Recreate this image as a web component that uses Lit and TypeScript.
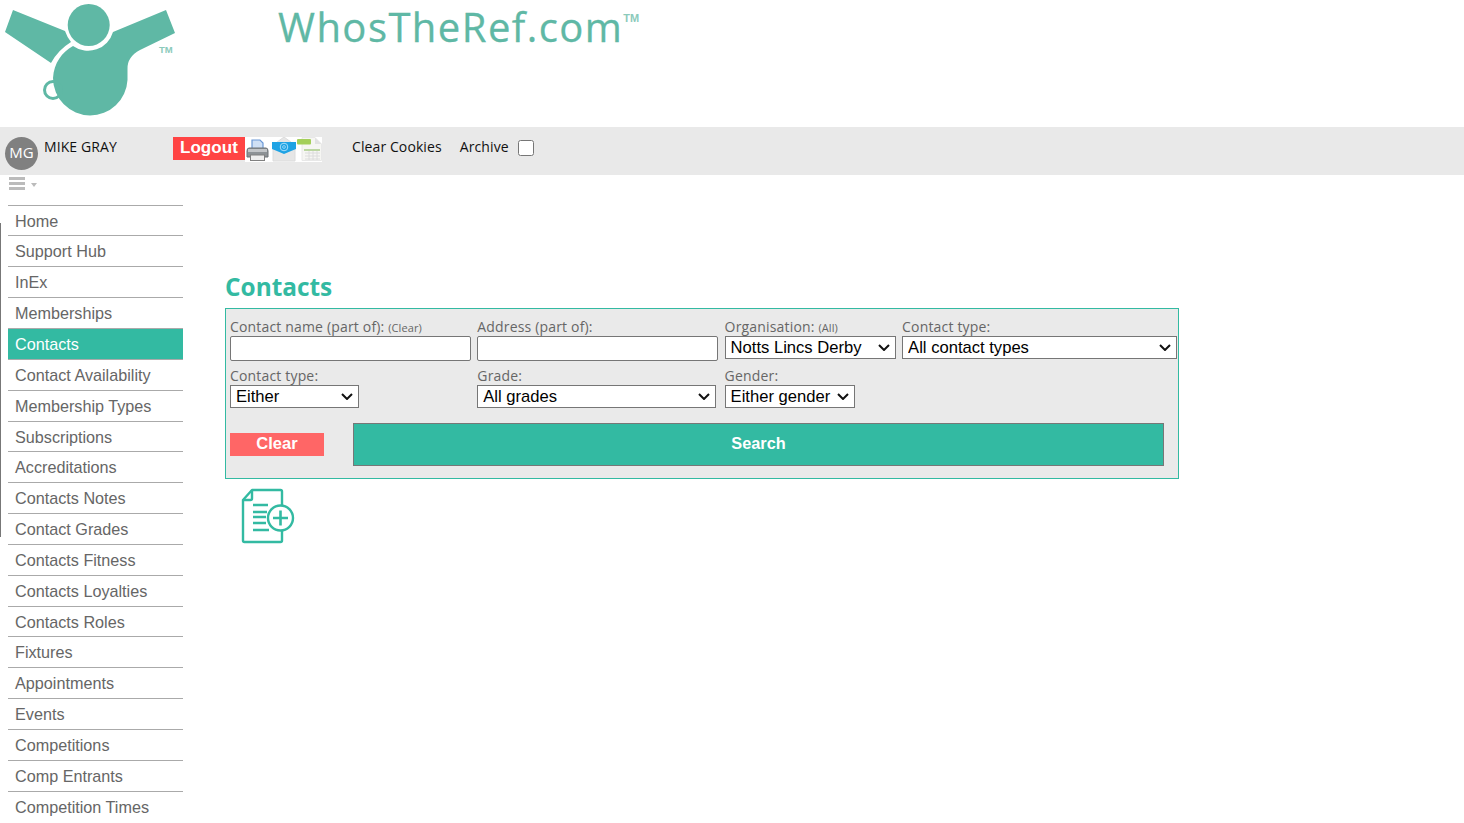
import { LitElement, html, css, svg } from "lit";
import { customElement } from "lit/decorators.js";

const NAV = ["Home","Support Hub","InEx","Memberships","Contacts","Contact Availability","Membership Types","Subscriptions","Accreditations","Contacts Notes","Contact Grades","Contacts Fitness","Contacts Loyalties","Contacts Roles","Fixtures","Appointments","Events","Competitions","Comp Entrants","Competition Times"];

const logo = svg`<svg class="logo" width="180" height="127" viewBox="0 0 180 127">
  <g fill="#5fb8a5">
    <circle cx="88.7" cy="25" r="21"/>
    <path d="M13 10 L65 31 Q67 37 71 42 Q58 50 51 63 L5 32 Z"/>
    <path d="M166 10 L175 33 L140 50 Q127 57 127.5 69 L127.5 80 A37.5 37.5 0 0 1 90 115.5 A37.5 37.5 0 0 1 53 78 C54 63 62 52 73 46 A26 26 0 0 0 113 32 Z"/>
  </g>
  <circle cx="53" cy="90" r="8.5" fill="none" stroke="#5fb8a5" stroke-width="3"/>
</svg>`;

const printer = svg`<svg width="26" height="25" viewBox="0 0 26 25">
  <rect width="26" height="25" fill="#fff"/>
  <path d="M7 3 H15 L18 6 V14 H7 Z" fill="#cfe0f5" stroke="#6a98d6" stroke-width="1.2"/>
  <path d="M4 11 H21 Q23 11 23 14 V20 H2 V14 Q2 11 4 11 Z" fill="#8d9296" stroke="#6d7276"/>
  <rect x="3" y="12" width="19" height="3" fill="#c2c5c8"/>
  <rect x="5.5" y="18" width="14" height="5.5" fill="#eee" stroke="#808080"/>
</svg>`;

const mail = svg`<svg width="26" height="25" viewBox="0 0 26 25">
  <rect width="26" height="25" fill="#fff"/>
  <path d="M2 8 L13 0 L24 8 V24 H2 Z" fill="#e6e6e6" stroke="#dcdcdc"/>
  <path d="M1 5 H25 V12 Q20 14 13 17 Q6 14 1 12 Z" fill="#1fa3e4"/>
  <circle cx="13" cy="10" r="3.8" fill="none" stroke="#a9def9" stroke-width="1"/>
  <circle cx="13" cy="10" r="1.4" fill="none" stroke="#a9def9" stroke-width=".8"/>
</svg>`;

const sheet = svg`<svg width="25" height="25" viewBox="0 0 25 25">
  <rect width="25" height="25" fill="#fff"/>
  <path d="M5 0.5 H18 L24.5 7 V23.5 H5 Z" fill="#f6f6f3" stroke="#e8e8e8"/>
  <path d="M18 .5 V7 H24.5 Z" fill="#e2e2e2"/>
  <rect x="0" y="2" width="14" height="5.5" rx="1" fill="#a4cf5a"/>
  <rect x="7" y="12" width="16" height="2" fill="#bcd6a2"/>
  <path d="M8 16 H23 M8 19 H23 M8 22 H23 M12 14 V23 M16 14 V23 M20 14 V23" stroke="#dcdcdc" stroke-width="1" fill="none"/>
</svg>`;

const addDoc = svg`<svg class="add" width="56" height="58" viewBox="0 0 56 58" fill="none" stroke="#33baa2" stroke-width="2.4" stroke-linejoin="round">
  <path d="M41 17 V3.5 Q41 2 39.5 2 H11 L2 12 V52.5 Q2 54 3.5 54 H39.5 Q41 54 41 52.5 V43"/>
  <path d="M11 2 V10.5 Q11 12 9.5 12 H2"/>
  <path d="M12 17 H27 M12 24 H26 M12 29 H25 M12 35 H25 M12 42 H28" stroke-width="2.6"/>
  <circle cx="39.5" cy="30" r="12.5"/>
  <path d="M39.5 22.5 V37.5 M32 30 H47" stroke-width="2.6"/>
</svg>`;

@customElement("app-root")
export class AppRoot extends LitElement {
  static styles = css`
    :host { display: block; height: 100vh; overflow: hidden; background: #fff; font-family: "Open Sans", sans-serif; position: relative; }
    * { box-sizing: border-box; }
    .header { display: flex; height: 127px; }
    .logo-wrap { width: 278px; position: relative; }
    .logo { display: block; }
    .tm-logo { position: absolute; left: 159px; top: 44px; font: bold 9.5px "Liberation Sans", sans-serif; color: #8ccabb; }
    .brand { font-family: "Open Sans", sans-serif; font-size: 40px; line-height: 54px; color: #5fb8a5; letter-spacing: 1.45px; display: flex; align-items: flex-start; height: 54px; -webkit-text-stroke: .3px #5fb8a5; }
    .brand sup { font: bold 11px/1 "Liberation Sans", sans-serif; letter-spacing: 0; margin: 13px 0 0 0; color: #8ccabb; -webkit-text-stroke: 0; }
    .bar { display: flex; align-items: flex-start; height: 48px; background: #e9e9e9; padding: 10px 0 0 5px; font-size: 14px; letter-spacing: .1px; color: #111; }
    .avatar { width: 33px; height: 33px; border-radius: 50%; background: #808080; color: #fff; display: flex; align-items: center; justify-content: center; font-size: 15px; padding-bottom: 3px; letter-spacing: 0; }
    .user { width: 129px; margin-left: 6px; line-height: 20px; }
    .logout { width: 72px; height: 23px; background: #ff4444; color: #fff; font: bold 17px/21px "Liberation Sans", sans-serif; text-align: center; }
    .icons { display: flex; width: 107px; }
    .icons svg { display: block; }
    .link { line-height: 20px; }
    .cookies { margin-right: 18px; }
    .arch { margin-right: 9px; }
    .bar input { width: 16px; height: 16px; margin: 3px 0 0; }
    .page { display: flex; }
    .side { width: 183px; padding-left: 8px; flex: none; }
    .burger { height: 29.6px; padding: 2px 0 0 1px; display: flex; gap: 6px; }
    .lines { width: 16px; display: flex; flex-direction: column; gap: 2px; }
    .lines i { display: block; height: 3px; background: #bbb; }
    .caret { margin-top: 6px; width: 0; height: 0; border: 3.5px solid transparent; border-top: 4px solid #bbb; }
    .nav-item { height: 30.85px; border-top: 1px solid #aaa; padding-left: 7px; font: 16.2px/30.85px "Liberation Sans", sans-serif; color: #666; }
    .nav-item.on { background: #33baa2; color: #fff; }
    .rule { position: absolute; left: 0; top: 223px; width: 1px; height: 314px; background: #777; }
    .main { padding: 96px 0 0 42px; }
    h1 { margin: 0; font-size: 24.4px; line-height: 31px; font-weight: 700; color: #33baa2; height: 37px; }
    .panel { width: 954px; height: 171px; border: 1px solid #33baa2; background: #eaeaea; padding: 9px 0 0 4px; }
    .row { display: flex; height: 49px; }
    .field { display: flex; flex-direction: column; flex: none; }
    .w1 { width: 247.3px; }
    .w2 { width: 177.5px; }
    label { font-size: 14px; letter-spacing: .17px; line-height: 18px; color: #666; height: 18px; white-space: nowrap; }
    label small { font-size: 11px; letter-spacing: .1px; }
    .text { width: 241px; height: 25px; border: 1px solid #767676; border-radius: 2px; background: #fff; padding: 0; }
    select {
      appearance: none; height: 23px; border: 1px solid #767676; border-radius: 0; padding: 0 0 0 5px;
      font: 16.6px "Liberation Sans", sans-serif; color: #000;
      background: #fff url("data:image/svg+xml,%3Csvg xmlns='http://www.w3.org/2000/svg' width='12' height='7' viewBox='0 0 12 7'%3E%3Cpath d='M1 1l5 5 5-5' fill='none' stroke='%23111' stroke-width='2'/%3E%3C/svg%3E") no-repeat right 5px center;
    }
    .s-org { width: 171px; } .s-type { width: 275px; } .s-either { width: 129px; } .s-grade { width: 239px; } .s-gender { width: 130px; }
    .actions { display: flex; align-items: center; margin-top: 7px; }
    .clear { width: 94px; height: 23px; border: 0; background: #ff6666; color: #fff; font: bold 16.5px "Liberation Sans", sans-serif; padding: 0 0 2px; }
    .search { width: 811px; height: 43px; margin-left: 29px; border: 1px solid #777; background: #33baa2; color: #fff; font: bold 16.3px "Liberation Sans", sans-serif; padding: 0 0 3px; }
    .add { display: block; margin: 9px 0 0 16px; }
  `;

  render() {
    return html`
      <div class="header">
        <div class="logo-wrap">${logo}<span class="tm-logo">TM</span></div>
        <div class="brand">WhosTheRef.com<sup>TM</sup></div>
      </div>
      <div class="bar">
        <div class="avatar">MG</div>
        <div class="user">MIKE GRAY</div>
        <div class="logout">Logout</div>
        <div class="icons">${printer}${mail}${sheet}</div>
        <span class="link cookies">Clear Cookies</span>
        <span class="link arch">Archive</span>
        <input type="checkbox" />
      </div>
      <div class="page">
        <div class="side">
          <div class="burger">
            <div class="lines"><i></i><i></i><i></i></div>
            <div class="caret"></div>
          </div>
          ${NAV.map(n => html`<div class="nav-item ${n === "Contacts" ? "on" : ""}">${n}</div>`)}
        </div>
        <div class="main">
          <h1>Contacts</h1>
          <div class="panel">
            <div class="row">
              <div class="field w1"><label>Contact name (part of): <small>(Clear)</small></label><input class="text" /></div>
              <div class="field w1"><label>Address (part of):</label><input class="text" /></div>
              <div class="field w2"><label>Organisation: <small>(All)</small></label><select class="s-org"><option>Notts Lincs Derby</option></select></div>
              <div class="field"><label>Contact type:</label><select class="s-type"><option>All contact types</option></select></div>
            </div>
            <div class="row">
              <div class="field w1"><label>Contact type:</label><select class="s-either"><option>Either</option></select></div>
              <div class="field w1"><label>Grade:</label><select class="s-grade"><option>All grades</option></select></div>
              <div class="field w2"><label>Gender:</label><select class="s-gender"><option>Either gender</option></select></div>
            </div>
            <div class="actions">
              <button class="clear">Clear</button>
              <button class="search">Search</button>
            </div>
          </div>
          ${addDoc}
        </div>
      </div>
      <div class="rule"></div>
    `;
  }
}
